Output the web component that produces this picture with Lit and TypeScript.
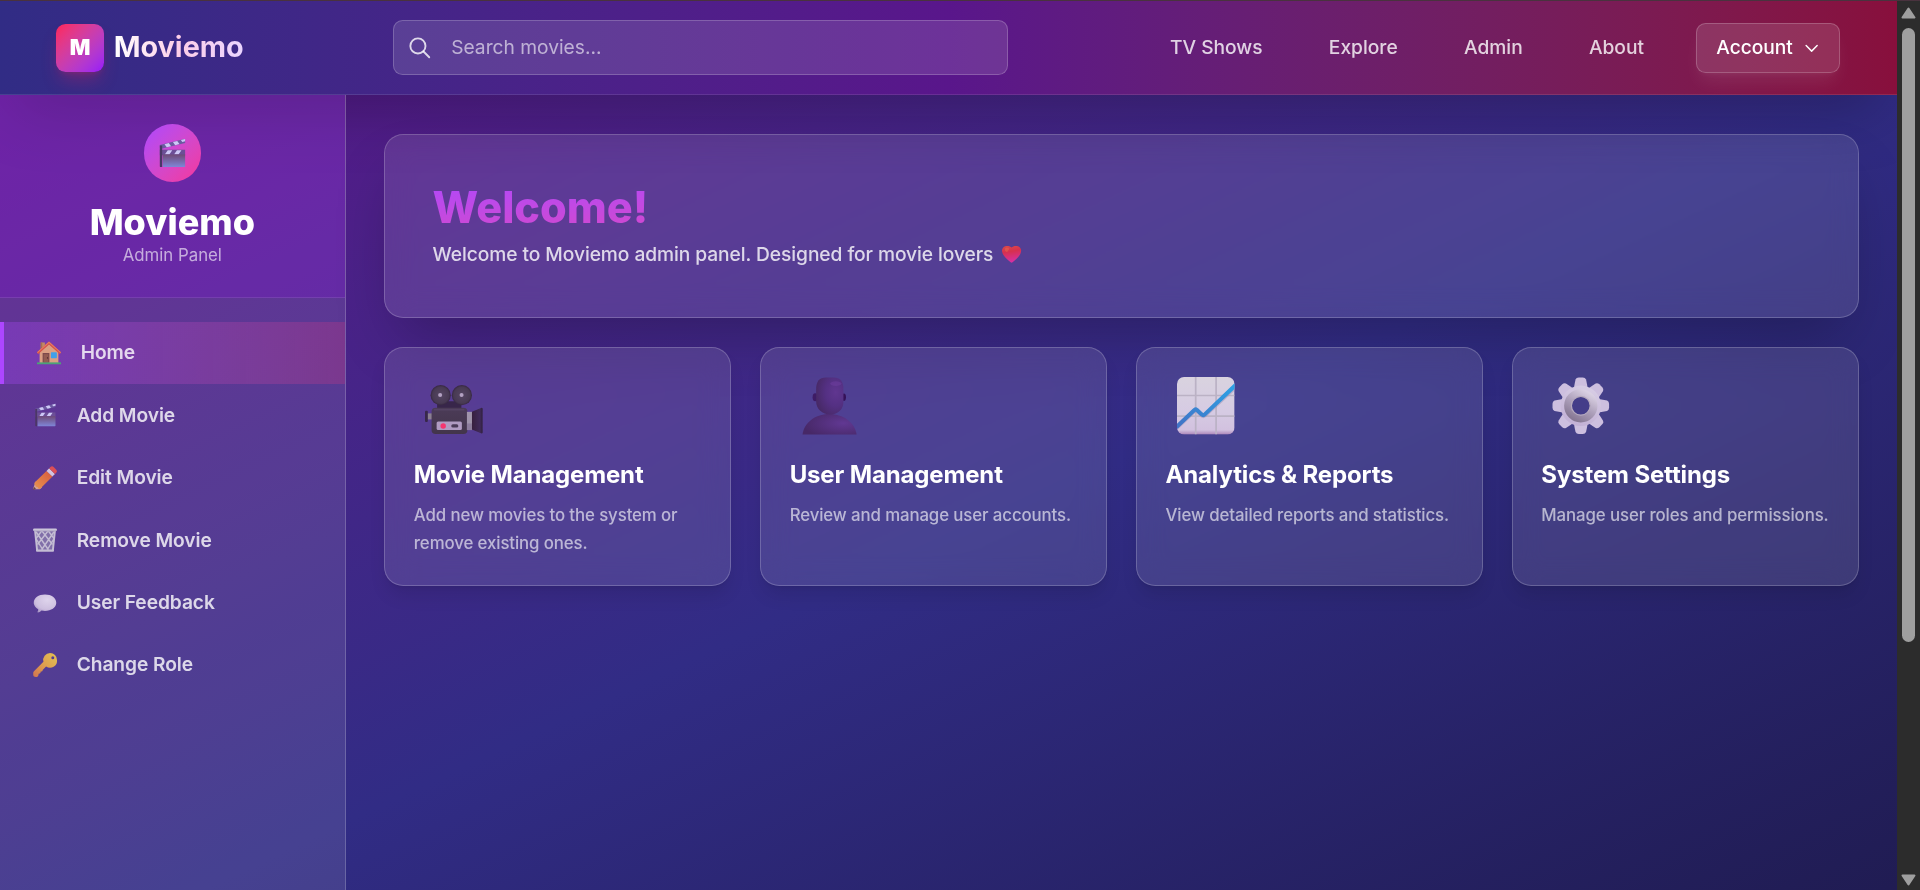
import { LitElement, html, css, svg } from "lit";
import { customElement } from "lit/decorators.js";

const clapper = (id: string) => html`<svg viewBox="0 0 32 32">
  <defs><linearGradient id=${id} x1="0" y1="0" x2="0" y2="1"><stop stop-color="#6e4a76"/><stop offset="1" stop-color="#7f86d8"/></linearGradient></defs>
  <path fill="#6c5aa2" d="M3 7.500 29 1a1 1 0 0 1 1 1v3.400L4.500 11.500 3 10z"/>
  <path fill="#cdc8f6" d="m8 6.600 4.600-1.200 2.400 3.300-4.600 1.100zM17 4.300l4.600-1.200 2.400 3.300-4.600 1.200zM25.500 2.200 30 1v2.500l-3 .8z"/>
  <path fill="#6c4f97" d="M3 12.500h27v6H3z"/>
  <path fill="#cdc8f6" d="m11.500 13 4.800 0-3 4.300H8.500zM21.300 13h4.800l-3 4.300h-4.800z"/>
  <path fill="url(#${id})" d="M6 17.500h24V30a1 1 0 0 1-1 1H6z"/>
  <path fill="#4b3766" d="M3 8h2.500v23H4a1 1 0 0 1-1-1z"/>
</svg>`;

const icons: Record<string, unknown> = {
  home: html`<svg viewBox="0 0 32 32">
    <path fill="#c08a68" d="M5 2h5.500v12H5z"/><path fill="#a87050" d="M5 2h2v12H5z"/>
    <path fill="#dba083" d="M16 4 28.500 15v14.500h-25V15z"/>
    <path fill="#d9544a" d="M16 .5 32 15l-1.500 2.500L16 4.800 1.500 17.500 0 15z"/>
    <path fill="#e57b61" d="M16 .5 32 15l-.7 1L16 2.600.7 16 0 15z"/>
    <path fill="#7d4a4c" d="M7.500 16h9v13h-9z"/><path fill="#935c52" d="M9 17.500h6V29H9z"/><circle cx="14" cy="22.500" r=".8" fill="#422"/>
    <rect x="18.500" y="15" width="8" height="8" rx="1" fill="#3fa0ea"/>
    <path fill="#4ca377" d="M0 28.500h32V31H0z"/></svg>`,
  clapper: clapper("clap-nav"),
  pencil: html`<svg viewBox="0 0 32 32">
    <defs><linearGradient id="pen" x1="0" y1="1" x2="1" y2="0"><stop stop-color="#e69550"/><stop offset="1" stop-color="#d9583c"/></linearGradient></defs>
    <path fill="#d3a093" d="m3.500 20.500 8.500 8L9 31H1.500a1 1 0 0 1-1.200-1.200z"/><path fill="#65434e" d="m1.300 27.500 2.800 3-3.400 1L.2 31z"/>
    <path fill="url(#pen)" d="M18 6.500 26 14 9.200 30.500c-1.800 0-2.700-.6-3-2.500-2 0-3-1-3.200-2.700-1.500-.5-1.500-2.300-.5-3.600z"/>
    <path fill="#d2c3df" d="m18 6.500 3.500-3.400 7.800 7.700L25.800 14z"/>
    <path fill="#dc4f56" d="m21.500 3.100 1.800-1.800a3 3 0 0 1 4.200 0l3.500 3.600a3 3 0 0 1 0 4.200l-1.700 1.700z"/></svg>`,
  bin: html`<svg viewBox="0 0 32 32">
    <path fill="#9d92b8" fill-opacity=".6" d="m2.500 4 2.500 26h22l2.500-26z"/>
    <g fill="none" stroke="#c4bdd4" stroke-width="1.900"><path d="M4 5 20.500 29M12 4l14 18M20.500 4 28 14M4.500 15 13 29M28 5 11.500 29M20 4 6 22M11.500 4 4 14M27.500 15 19 29"/>
    <path stroke-width="2.600" d="m2.800 4 2.700 26M29.200 4l-2.700 26"/></g>
    <rect y="0.500" width="32" height="3.600" rx="1.700" fill="#cbc5d9"/><path fill="#a9a0bf" d="M1 3.200h30l-.8 1.500H1.800z"/>
    <rect x="4" y="28.500" width="24" height="3.200" rx="1.300" fill="#c3bcd4"/></svg>`,
  bubble: html`<svg viewBox="0 0 32 32">
    <defs><radialGradient id="bub" cx=".6" cy=".3" r=".75"><stop stop-color="#ded4ec"/><stop offset=".7" stop-color="#cdbfdf"/><stop offset="1" stop-color="#ac99c7"/></radialGradient></defs>
    <path fill="url(#bub)" d="M16 4.500c8.600 0 15 4.700 15 11s-6.400 11-15 11q-2.400 0-4.600-.5Q9 28.400 6.600 28.600c-.7 0-.8-.7-.4-1.200q1-1.300.7-3C3.300 22.300 1 19.200 1 15.500c0-6.300 6.400-11 15-11"/></svg>`,
  key: html`<svg viewBox="0 0 32 32">
    <defs><linearGradient id="key" x1="0" y1="1" x2="1" y2="0"><stop stop-color="#d0744f"/><stop offset=".5" stop-color="#dea14f"/><stop offset="1" stop-color="#e3c253"/></linearGradient></defs>
    <path fill="url(#key)" fill-rule="evenodd" d="M22.800 0A9.200 9.200 0 0 0 13.900 11.600L1.300 24.200A3 3 0 0 0 .3 27v2c0 2 1.500 3 3.500 3s3.600-1.500 3.600-3.500v-1c2 .2 3-.8 2.900-2.700 1.700.1 2.600-.7 2.600-2.300l4.500-4.600A9.300 9.300 0 0 0 32 9.200 9.200 9.200 0 0 0 22.800 0M26.400 4.400a2 2 0 1 1 0 4 2 2 0 0 1 0-4"/></svg>`,
  heart: html`<svg viewBox="1 1 30 30" preserveAspectRatio="none">
    <defs><linearGradient id="hrt" x1="0" y1="0" x2=".2" y2="1"><stop stop-color="#dd4a48"/><stop offset=".4" stop-color="#d6304f"/><stop offset="1" stop-color="#d630a0"/></linearGradient></defs>
    <path fill="url(#hrt)" d="M16 3.800C13.500.5 6.500-.2 3 3.700.2 7 .5 12 3 16.500c3 5.700 8 10.300 11.500 13.500a2.200 2.200 0 0 0 3 0c3.500-3.200 8.500-7.800 11.500-13.500 2.500-4.500 2.800-9.500 0-12.800C25.500-.2 18.500.5 16 3.800"/>
    <path fill="#e8784f" opacity=".4" d="M6 5c2-2 5-1.600 6.500.8L9 12C6 11 4.500 8 6 5"/></svg>`,
  camera: html`<svg viewBox="0 0 57 57">
    <defs><linearGradient id="cam" x1="0" y1="0" x2="0" y2="1"><stop stop-color="#4b3b57"/><stop offset="1" stop-color="#43354b"/></linearGradient>
    <linearGradient id="hood" x1="0" x2="1"><stop stop-color="#38203f"/><stop offset=".75" stop-color="#402a59"/><stop offset="1" stop-color="#2f203a"/></linearGradient>
    <radialGradient id="reel"><stop stop-color="#554563"/><stop offset=".8" stop-color="#483a53"/><stop offset="1" stop-color="#362741"/></radialGradient></defs>
    <path fill="#38264a" d="M12 24h24v9H12z"/>
    <circle cx="15.500" cy="18" r="10" fill="url(#reel)"/><circle cx="36.500" cy="18" r="10" fill="url(#reel)"/>
    <circle cx="15" cy="17.800" r="2" fill="#b3a1c2"/><circle cx="36.200" cy="17.800" r="2" fill="#b3a1c2"/>
    <rect x="2" y="36" width="6" height="6" fill="#8b7f92"/><rect x="0" y="33.500" width="2.800" height="11" rx="1" fill="#38284a"/>
    <rect x="6.500" y="30.500" width="35.500" height="26" rx="4" fill="url(#cam)"/>
    <path stroke="#5b4969" stroke-width="1" fill="none" d="M9 32.500h30"/>
    <rect x="41.500" y="34.500" width="5" height="18" fill="#a094ab"/><path fill="#8c7c9c" d="M41.500 46h5v6.500h-5z"/>
    <path fill="url(#hood)" d="M46.500 34.500 56 30.500a1 1 0 0 1 1 1V55a1 1 0 0 1-1 1l-9.500-4z"/>
    <rect x="11.500" y="44" width="25" height="8.500" rx="1.500" fill="#b09bc1"/><circle cx="18" cy="48.500" r="2.700" fill="#f5366f"/><rect x="26" y="46.800" width="7" height="3.300" rx="1.600" fill="#4b3b57"/></svg>`,
  user: html`<svg viewBox="-.5 0 57 57">
    <defs><radialGradient id="head" cx=".72" cy=".4" r=".75"><stop stop-color="#603690"/><stop offset=".5" stop-color="#543083"/><stop offset="1" stop-color="#472966"/></radialGradient>
    <radialGradient id="bust" cx=".75" cy=".45" r=".75"><stop stop-color="#613893"/><stop offset="1" stop-color="#472867"/></radialGradient></defs>
    <ellipse cx="13.500" cy="20" rx="2.500" ry="4" fill="#3e1c65"/><ellipse cx="42" cy="20" rx="2" ry="3.600" fill="#351158"/>
    <path fill="url(#bust)" d="M1 57c1-11 12-20.500 26.500-20.500S53.500 46 54.500 57z"/>
    <path fill="url(#head)" d="M14.500 12C14.500 4 18 .5 24 .5h8c6 0 9.500 3.500 9.500 11.500v12c0 8-5 13-13 13s-14-5-14-13z"/>
    <ellipse cx="34" cy="6.500" rx="5.500" ry="2.300" fill="#7440a3" opacity=".45"/></svg>`,
  chart: html`<svg viewBox="0 0 57 57">
    <defs><linearGradient id="paper" x1="0" y1="0" x2="0" y2="1"><stop stop-color="#d9d3df"/><stop offset=".6" stop-color="#d6cbe3"/><stop offset=".92" stop-color="#d2c1df"/><stop offset="1" stop-color="#ab85b9"/></linearGradient>
    <linearGradient id="trend" x1="0" y1="1" x2="1" y2="0"><stop stop-color="#4272c5"/><stop offset="1" stop-color="#2ca3e6"/></linearGradient>
    <clipPath id="sheet"><rect width="57" height="57" rx="7"/></clipPath></defs>
    <g clip-path="url(#sheet)"><rect width="57" height="57" fill="url(#paper)"/>
    <path stroke="#bbb2c5" stroke-width="1.700" d="M18.500 0v57M38.700 0v57M0 18.300h57M0 38.800h57"/>
    <path fill="none" stroke="#9c8fb5" stroke-opacity=".5" stroke-width="4" stroke-linejoin="round" d="m-1 51 18.500-17.500q1-1 2 0l5 4.500q1.500 1.500 3 0L59 9"/>
    <path fill="none" stroke="url(#trend)" stroke-width="4" stroke-linejoin="round" d="m-1 50 18.500-17.500q1-1 2 0l5 4.500q1.500 1.500 3 0L59 7"/></g></svg>`,
  gear: html`<svg viewBox="0 0 57 57">
    <defs><linearGradient id="teeth" gradientUnits="userSpaceOnUse" x1="38" y1="0" x2="18" y2="57"><stop stop-color="#dcd4e8"/><stop offset="1" stop-color="#bda9d2"/></linearGradient>
    <linearGradient id="hub" x1=".8" y1="0" x2=".2" y2="1"><stop stop-color="#d9d0e2"/><stop offset=".5" stop-color="#ada0bb"/><stop offset="1" stop-color="#877894"/></linearGradient></defs>
    <g fill="#cdbfdf">${[0, 45, 90, 135].map((a) => svg`<path transform="rotate(${a} 28.500 28.500)" d="M21.500 12q1-6 1.800-9.500Q24 .5 26.500.5h4q2.300 0 3.200 2Q34.500 6 35.500 12v33q-1 6-1.800 9.500-.9 2-3.200 2h-4q-2.300 0-3.200-2Q22.500 51 21.500 45z"/>`)}</g>
    <circle cx="28.500" cy="28.500" r="20" fill="url(#teeth)"/>
    <circle cx="28.500" cy="28.500" r="13" fill="none" stroke="url(#hub)" stroke-width="7"/>
    <circle cx="28.500" cy="28.500" r="9.300" fill="#443d89" stroke="#b5a9bd" stroke-width="1.200"/></svg>`,
};

const navItems = [
  ["home", "Home"],
  ["clapper", "Add Movie"],
  ["pencil", "Edit Movie"],
  ["bin", "Remove Movie"],
  ["bubble", "User Feedback"],
  ["key", "Change Role"],
];

const cards = [
  ["camera", "Movie Management", "Add new movies to the system or remove existing ones."],
  ["user", "User Management", "Review and manage user accounts."],
  ["chart", "Analytics & Reports", "View detailed reports and statistics."],
  ["gear", "System Settings", "Manage user roles and permissions."],
];

@customElement("app-root")
export class AppRoot extends LitElement {
  static styles = css`
    :host { display: flex; height: 890px; overflow: hidden; background: #2c2c2c; font-family: Inter, sans-serif; color: #fff; }
    * { box-sizing: border-box; }
    h1, h2, h3, p { margin: 0; }
    svg { display: block; width: 100%; height: 100%; overflow: visible; }
    .viewport { width: 1897px; height: 890px; flex: none; overflow: hidden; border-top: 1px solid #49323e; }
    .page { zoom: 1.2; display: flex; flex-direction: column; position: relative; }
    .top { position: relative; z-index: 1; flex: none; height: 78.400px; display: flex; align-items: center; border-bottom: 1px solid rgba(255,255,255,.1);
      padding: 0 47.500px 0 46.700px; background: linear-gradient(to right in oklab, #312c85, #59168b 50%, #880f3c); box-shadow: 0 25px 50px -12px rgba(0,0,0,.25); }
    .brand { display: flex; align-items: center; gap: 8px; width: 281px; flex: none; }
    .mark { width: 40px; height: 40px; border-radius: 8px; display: grid; place-items: center; font-size: 18px; font-weight: 900; padding-bottom: 1px;
      background: linear-gradient(to bottom right in oklab, #ff2056, #9810fa); box-shadow: 0 10px 15px -3px rgba(255,32,86,.25), 0 4px 6px -4px rgba(255,32,86,.25); }
    .wordmark { font-size: 24px; line-height: 32px; font-weight: 700; color: transparent; background: linear-gradient(to right in oklab, #fff, #fccee8, #e9d4ff); background-clip: text; -webkit-background-clip: text; }
    .search { width: 512px; height: 45.800px; flex: none; display: flex; align-items: center; border: 1px solid rgba(255,255,255,.2); border-radius: 8px; background: rgba(255,255,255,.12); padding: 0 0 1px 12px; gap: 18.200px; font-size: 16px; color: rgba(255,255,255,.6); }
    .lens { width: 17.300px; height: 17.300px; color: rgba(255,255,255,.8); }
    .links { margin-left: auto; display: flex; align-items: center; font-size: 16px; font-weight: 500; color: rgba(255,255,255,.8); gap: 55.200px; padding-bottom: 1px; }
    .account { margin-left: 43.300px; width: 120px; height: 42px; margin-top: .6px; display: flex; align-items: center; justify-content: center; gap: 8.500px; padding: 0 0 1.500px; border: 1px solid rgba(255,255,255,.2); border-radius: 8px; background: rgba(255,255,255,.12); font-size: 16px; font-weight: 500;
      box-shadow: 0 10px 15px -3px rgba(255,255,255,.08), 0 4px 6px -4px rgba(255,255,255,.08); letter-spacing: -.03px; }
    .chev { width: 14px; height: 14px; }
    .body { display: flex; height: 741px; background: linear-gradient(to bottom right in oklab, #59168b, #312c85 50%, #1e1a4d); }
    .side { width: 288px; flex: none; border-right: 1px solid rgba(255,255,255,.2); background: rgba(255,255,255,.1); position: relative; z-index: 2; }
    .profile { height: 169px; padding-top: 24.500px; display: flex; flex-direction: column; align-items: center; border-bottom: 1px solid rgba(255,255,255,.1); background: rgba(130,4,222,.24); }
    .avatar { width: 48px; height: 48px; border-radius: 50%; background: linear-gradient(to bottom right in oklab, #ad46ff, #f6339a); display: grid; place-items: center; }
    .slate { width: 25px; height: 25px; }
    .profile h2 { margin-top: 15.500px; font-size: 30px; line-height: 36px; font-weight: 800; }
    .role { font-size: 14px; line-height: 19px; color: rgba(255,255,255,.62); }
    .nav { padding-top: 20px; }
    .item { height: 52px; display: flex; align-items: center; padding-left: 27.500px; gap: 16.400px; font-size: 16px; font-weight: 600; letter-spacing: -.06px; color: rgba(255,255,255,.8); }
    .label { padding-bottom: 1.200px; }
    .item.active { border-left: 4px solid #ad46ff; background: linear-gradient(to right in oklab, rgba(173,70,255,.3), rgba(246,51,120,.21)); }
    .glyph { width: 20px; height: 20px; }
    .main { flex: 1; padding: 32.600px 32px 32px; display: flex; flex-direction: column; gap: 24px; }
    .hero, .card { border: 1px solid rgba(255,255,255,.2); border-radius: 16px; background: rgba(255,255,255,.11); backdrop-filter: blur(12px); }
    .hero { height: 153px; padding: 32px 39.700px; box-shadow: 0 25px 50px -12px rgba(0,0,0,.25); }
    .hero h1 { font-size: 36px; line-height: 56px; font-weight: 800; color: transparent; background: linear-gradient(to bottom right in oklab, #ad46ff, #f6339a); background-clip: text; -webkit-background-clip: text; }
    .lead { display: flex; align-items: center; gap: 7px; font-size: 16px; line-height: 23px; font-weight: 500; letter-spacing: -.06px; color: rgba(255,255,255,.8); }
    .love { width: 16px; height: 14px; }
    .grid { display: grid; grid-template-columns: repeat(4, 1fr); gap: 24px; }
    .card { height: 199.700px; padding: 24.800px 24px 0; box-shadow: 0 10px 15px -3px rgba(0,0,0,.1), 0 4px 6px -4px rgba(0,0,0,.1); }
    .pic { width: 48px; height: 48px; margin-left: 9.200px; }
    .card h3 { margin-top: 19.500px; font-size: 20px; line-height: 28px; font-weight: 700; letter-spacing: -.12px; white-space: nowrap; }
    .card p { margin-top: 7.500px; font-size: 14px; line-height: 23.600px; color: rgba(255,255,255,.62); margin-right: -8px; font-weight: 500; letter-spacing: -.08px; }
    .bar { width: 23px; height: 890px; border-top: 1px solid #49323e; display: flex; flex-direction: column; align-items: center; padding: 6px 0 4px 0; }
    .arrow { width: 15px; height: 12px; flex: none; }
    .thumb { width: 13px; height: 614px; margin-top: 9px; border-radius: 7px; background: #9f9f9f; }
    .arrow.down { margin-top: auto; }
  `;

  render() {
    return html`
      <div class="viewport"><div class="page">
        <header class="top">
          <div class="brand"><div class="mark">M</div><div class="wordmark">Moviemo</div></div>
          <div class="search">
            <span class="lens"><svg viewBox="0 0 20 20" fill="none" stroke="currentColor" stroke-width="1.800" stroke-linecap="round"><circle cx="8.600" cy="8.600" r="7.300"/><path d="m14 14 5.500 5.500"/></svg></span>
            <span>Search movies...</span>
          </div>
          <nav class="links"><span>TV Shows</span><span>Explore</span><span>Admin</span><span>About</span></nav>
          <div class="account"><span>Account</span><span class="chev"><svg viewBox="0 0 14 14" fill="none" stroke="currentColor" stroke-width="1.200" stroke-linecap="round" stroke-linejoin="round"><path d="m2.600 5.500 4.600 4.600 4.600-4.600"/></svg></span></div>
        </header>
        <div class="body">
          <aside class="side">
            <div class="profile">
              <div class="avatar"><span class="slate">${clapper("clap-big")}</span></div>
              <h2>Moviemo</h2><p class="role">Admin Panel</p>
            </div>
            <nav class="nav">${navItems.map(([icon, label], i) => html`<div class="item ${i === 0 ? "active" : ""}"><span class="glyph">${icons[icon]}</span><span class="label">${label}</span></div>`)}</nav>
          </aside>
          <main class="main">
            <section class="hero"><h1>Welcome!</h1><p class="lead"><span>Welcome to Moviemo admin panel. Designed for movie lovers</span><span class="love">${icons.heart}</span></p></section>
            <section class="grid">${cards.map(([icon, title, text]) => html`<article class="card"><div class="pic">${icons[icon]}</div><h3>${title}</h3><p>${text}</p></article>`)}</section>
          </main>
        </div>
      </div></div>
      <div class="bar">
        <span class="arrow"><svg viewBox="0 0 15 12"><path fill="#9f9f9f" stroke="#9f9f9f" stroke-width="2" stroke-linejoin="round" d="M7.500 1.500 13.500 10.500h-12z"/></svg></span>
        <div class="thumb"></div>
        <span class="arrow down"><svg viewBox="0 0 15 12"><path fill="#9f9f9f" stroke="#9f9f9f" stroke-width="2" stroke-linejoin="round" d="M7.500 10.500 13.500 1.500h-12z"/></svg></span>
      </div>`;
  }
}
